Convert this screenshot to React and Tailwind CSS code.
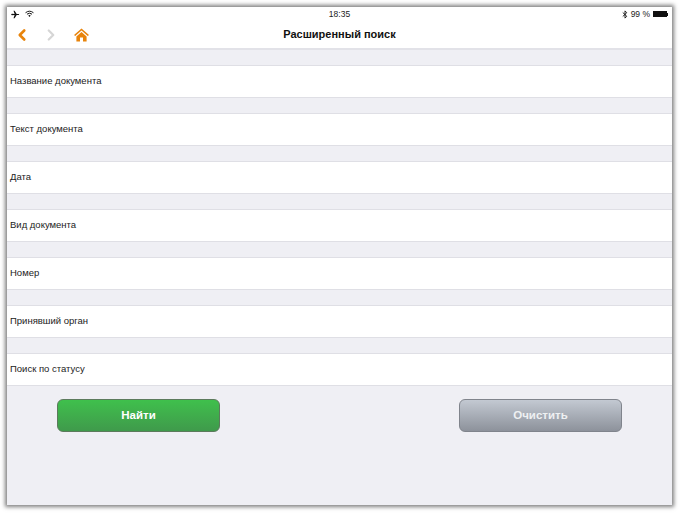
import { ChevronLeft, ChevronRight } from 'lucide-react';

const fields = ['Название документа', 'Текст документа', 'Дата', 'Вид документа', 'Номер', 'Принявший орган', 'Поиск по статусу'];

const StatusBar = () => (
    <div className="h-[14px] relative flex items-center justify-between pl-[4px] pr-[4px] text-[8.5px] text-[#222]">
        <div className="flex items-center gap-[5px]">
            <svg width="9" height="9" viewBox="0 0 10 10" fill="#111">
                <path d="M0 5 L1 4.2 L4 4.4 L2.8 0.8 L4 0.8 L6.3 4.4 L8.5 4.4 Q10 5 8.5 5.6 L6.3 5.6 L4 9.2 L2.8 9.2 L4 5.6 L1 5.8 Z" />
            </svg>
            <svg width="9" height="8" viewBox="0 0 10 8" fill="none" stroke="#111" strokeWidth="1.1">
                <path d="M0.6 2.6 Q5 -0.8 9.4 2.6" />
                <path d="M2.2 4.2 Q5 2 7.8 4.2" />
                <path d="M5 7.4 L3.6 5.6 Q5 4.6 6.4 5.6 Z" fill="#111" stroke="none" />
            </svg>
        </div>
        <span className="absolute left-0 right-0 text-center font-medium">18:35</span>
        <div className="flex items-center gap-[3px]">
            <svg width="6" height="9" viewBox="0 0 6 10" fill="none" stroke="#111" strokeWidth="1">
                <path d="M0.5 2.8 L5 7 L3 9 L3 1 L5 3 L0.5 7.2" />
            </svg>
            <span>99 %</span>
            <div className="flex items-center">
                <div className="w-[14px] h-[6px] bg-[#111]" />
                <div className="w-[1px] h-[3px] bg-[#111]" />
            </div>
        </div>
    </div>
);

const Toolbar = () => (
    <div className="h-[29px] relative flex items-center pl-[6px] border-b-2 border-[#e2e2e8]">
        <ChevronLeft size={18} strokeWidth={3.5} className="text-[#e8840c]" />
        <ChevronRight size={18} strokeWidth={3} className="text-[#d6d6d6] ml-[11px]" />
        <svg width="15" height="14" viewBox="0 0 15 14" className="ml-[14px]" fill="#e8840c">
            <path d="M7.5 0.4 L15 7 L13.8 8 L7.5 2.6 L1.2 8 L0 7 Z" />
            <path d="M7.5 4 L12.6 8.4 L12.6 13.6 L9 13.6 L9 9.6 L6 9.6 L6 13.6 L2.4 13.6 L2.4 8.4 Z" />
        </svg>
        <h1 className="absolute left-0 right-0 text-center text-[11px] font-bold text-[#111]">
            Расширенный поиск
        </h1>
    </div>
);

export default function App() {
    return (
        <div className="w-[680px] h-[514px] bg-white pl-[7px] pt-[7px] font-['Liberation_Sans',sans-serif]">
            <div className="w-[665px] h-[498px] bg-[#efeff4] flex flex-col overflow-hidden shadow-[0_0_4px_2px_rgba(0,0,0,0.5)]">
                <div className="bg-white">
                    <StatusBar />
                    <Toolbar />
                </div>
                <div className="flex flex-col gap-[15px] pt-[15px]">
                    {fields.map((f) => (
                        <div key={f} className="h-[33px] bg-white border-y border-[#dfdfe5] flex items-center pl-[3px] text-[9.5px] text-[#222]">
                            {f}
                        </div>
                    ))}
                </div>
                <div className="flex justify-between pl-[50px] pr-[50px] pt-[13px]">
                    <button className="w-[163px] h-[33px] rounded-[6px] border border-[#5c7a5c] bg-gradient-to-b from-[#3fc04c] to-[#3f9a4b] text-white text-[11.5px] font-bold">
                        Найти
                    </button>
                    <button className="w-[163px] h-[33px] rounded-[6px] border border-[#80848c] bg-gradient-to-b from-[#c3c9d2] to-[#8d929b] text-[#eef0f2] text-[11.5px] font-bold">
                        Очистить
                    </button>
                </div>
            </div>
        </div>
    );
}
